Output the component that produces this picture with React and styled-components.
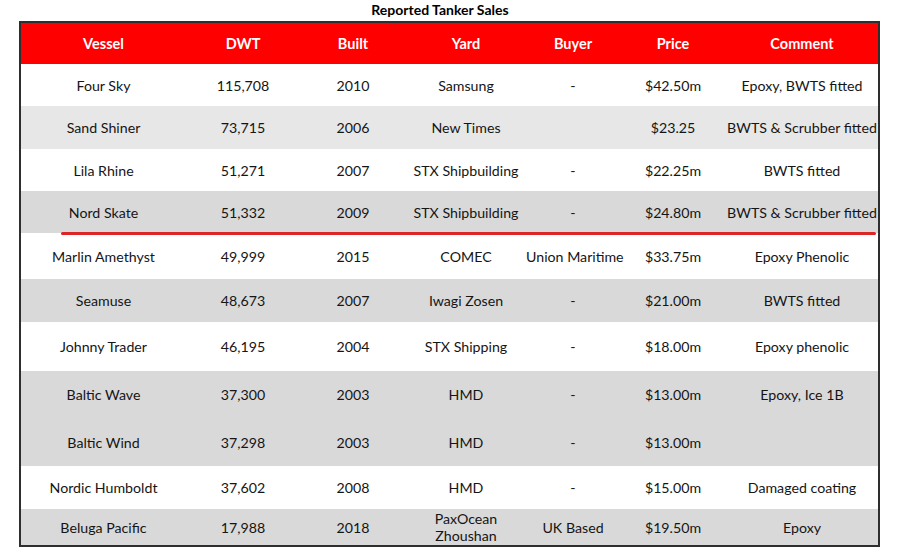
import React from "react";
import styled, { createGlobalStyle } from "styled-components";

const Global = createGlobalStyle`
  html, body { margin: 0; padding: 0; background: #fff; }
  body { font-family: "Lato", "Open Sans", sans-serif; color: #151515; }
`;

const Page = styled.div`
  width: 916px;
  height: 560px;
  padding-left: 19px;
  box-sizing: border-box;
`;

const Title = styled.div`
  width: 860px;
  padding-right: 18px;
  box-sizing: border-box;
  height: 21px;
  text-align: center;
  font-weight: 700;
  font-size: 14px;
  line-height: 20px;
  color: #000;
`;

const Table = styled.table`
  width: 861px;
  border-collapse: collapse;
  table-layout: fixed;
  border: 2px solid #2e2e2e;
`;

const HeadRow = styled.tr`
  height: 42px;
  background: #ff0000;
`;

const Th = styled.th`
  color: #fff;
  font-weight: 700;
  font-size: 14.5px;
  text-align: center;
  padding: 0;
  vertical-align: middle;
`;

const Row = styled.tr`
  height: ${(p) => p.$h}px;
  background: ${(p) => p.$bg};
`;

const Td = styled.td`
  position: relative;
  padding: 0;
  text-align: center;
  vertical-align: middle;
  font-size: 14.2px;
  line-height: 17px;
  white-space: ${(p) => (p.$wrap ? "normal" : "nowrap")};
  overflow: visible;
`;

const Underline = styled.div`
  position: absolute;
  left: 40px;
  width: 815px;
  bottom: -2px;
  height: 3px;
  border-radius: 2px;
  background: #dc2626;
  z-index: 2;
`;

const cols = [166, 114, 106, 120, 94, 106, 153];
const heads = ["Vessel", "DWT", "Built", "Yard", "Buyer", "Price", "Comment"];

const W = "#ffffff";
const G1 = "#e7e7e7";
const G2 = "#d9d9d9";

const rows = [
  { h: 42, bg: W, d: ["Four Sky", "115,708", "2010", "Samsung", "-", "$42.50m", "Epoxy, BWTS fitted"] },
  { h: 43, bg: G1, d: ["Sand Shiner", "73,715", "2006", "New Times", "", "$23.25", "BWTS & Scrubber fitted"] },
  { h: 42, bg: W, d: ["Lila Rhine", "51,271", "2007", "STX Shipbuilding", "-", "$22.25m", "BWTS fitted"] },
  { h: 42, bg: G2, line: true, d: ["Nord Skate", "51,332", "2009", "STX Shipbuilding", "-", "$24.80m", "BWTS & Scrubber fitted"] },
  { h: 46, bg: W, d: ["Marlin Amethyst", "49,999", "2015", "COMEC", "Union Maritime", "$33.75m", "Epoxy Phenolic"] },
  { h: 43, bg: G2, d: ["Seamuse", "48,673", "2007", "Iwagi Zosen", "-", "$21.00m", "BWTS fitted"] },
  { h: 49, bg: W, d: ["Johnny Trader", "46,195", "2004", "STX Shipping", "-", "$18.00m", "Epoxy phenolic"] },
  { h: 47, bg: G2, d: ["Baltic Wave", "37,300", "2003", "HMD", "-", "$13.00m", "Epoxy, Ice 1B"] },
  { h: 48, bg: G2, d: ["Baltic Wind", "37,298", "2003", "HMD", "-", "$13.00m", ""] },
  { h: 43, bg: W, d: ["Nordic Humboldt", "37,602", "2008", "HMD", "-", "$15.00m", "Damaged coating"] },
  { h: 37, bg: G2, d: ["Beluga Pacific", "17,988", "2018", "PaxOcean Zhoushan", "UK Based", "$19.50m", "Epoxy"] },
];

export default function App() {
  return (
    <>
      <Global />
      <Page>
        <Title>Reported Tanker Sales</Title>
        <Table>
          <colgroup>
            {cols.map((w, i) => (
              <col key={i} style={{ width: w }} />
            ))}
          </colgroup>
          <thead>
            <HeadRow>
              {heads.map((h) => (
                <Th key={h}>{h}</Th>
              ))}
            </HeadRow>
          </thead>
          <tbody>
            {rows.map((r, i) => (
              <Row key={i} $h={r.h} $bg={r.bg}>
                {r.d.map((c, j) => (
                  <Td key={j} $wrap={j === 3 && c.startsWith("PaxOcean")}>
                    {c}
                    {r.line && j === 0 && <Underline />}
                  </Td>
                ))}
              </Row>
            ))}
          </tbody>
        </Table>
      </Page>
    </>
  );
}
